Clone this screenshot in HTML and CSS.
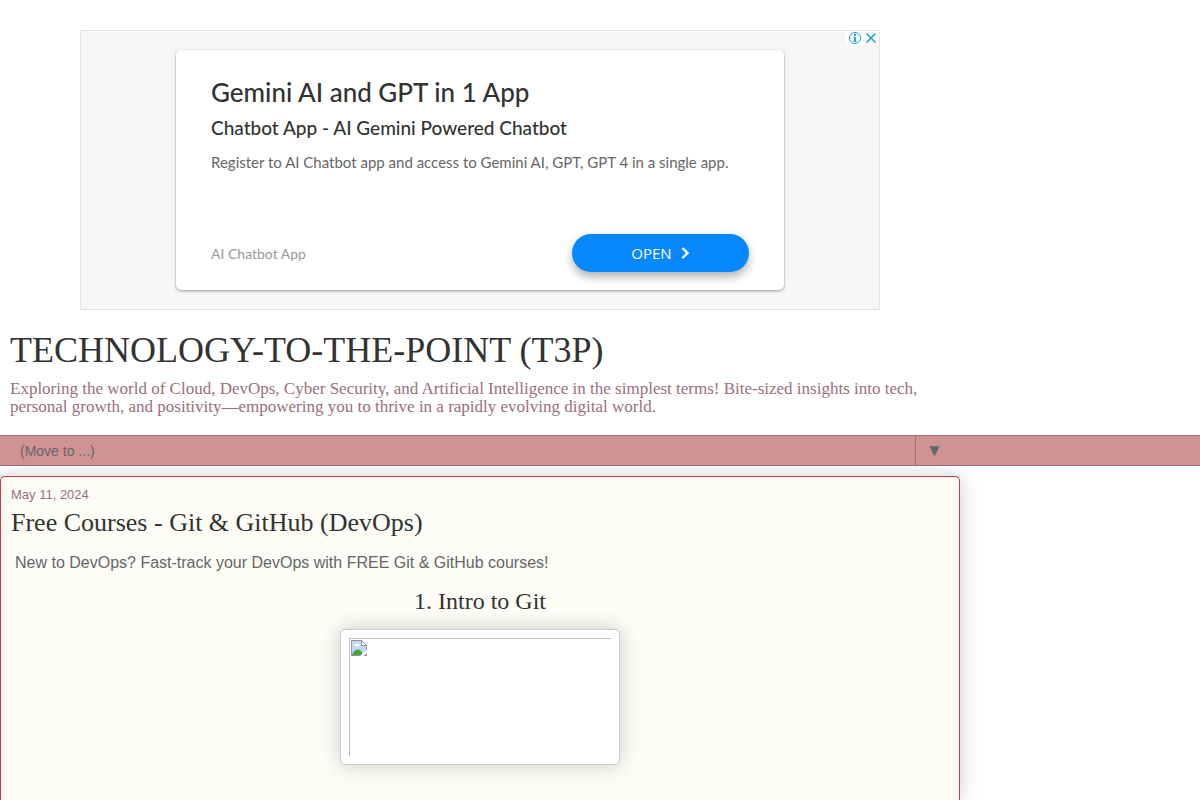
FILE: index.html
```
<!DOCTYPE html>
<html lang="en">
<head>
<meta charset="utf-8">
<meta name="viewport" content="width=device-width, initial-scale=1.0">
<title>TECHNOLOGY-TO-THE-POINT (T3P)</title>
<link rel="stylesheet" href="styles.css">
</head>
<body>
<aside class="ad">
  <div class="ad-choices">
    <a href="#" aria-label="Ad information"><svg width="14" height="14" viewBox="0 0 14 14" fill="none" stroke="#18a5c7"><circle cx="7" cy="7" r="5.5"/><path d="M7 3v2M7 6v5" stroke-width="1.8"/><path d="M5.500 6.300h1.500M5.500 10.500h3"/></svg></a>
    <button class="ad-close" aria-label="Close ad"><svg width="12" height="12" viewBox="0 0 12 12" fill="none" stroke="#18a5c7" stroke-width="1.6"><path d="M1.5 1.5l9 9M10.5 1.5l-9 9"/></svg></button>
  </div>
  <div class="ad-card">
    <h2 class="ad-title">Gemini AI and GPT in 1 App</h2>
    <h3 class="ad-subtitle">Chatbot App - AI Gemini Powered Chatbot</h3>
    <p class="ad-text">Register to AI Chatbot app and access to Gemini AI, GPT, GPT 4 in a single app.</p>
    <div class="ad-footer">
      <span class="ad-brand">AI Chatbot App</span>
      <button class="ad-open">OPEN <svg width="9" height="12" viewBox="0 0 9 12" fill="none" stroke="#fff" stroke-width="2.4"><path d="M1.5 1l5 5-5 5"/></svg></button>
    </div>
  </div>
</aside>

<header class="header">
  <h1 class="title">TECHNOLOGY-TO-THE-POINT (T3P)</h1>
  <p class="description">Exploring the world of Cloud, DevOps, Cyber Security, and Artificial Intelligence in the simplest terms! Bite-sized insights into tech, personal growth, and positivity—empowering you to thrive in a rapidly evolving digital world.</p>
</header>

<nav class="tabs">
  <div class="tabs-inner">
    <select class="tabs-select" aria-label="Move to">
      <option>(Move to ...)</option>
    </select>
    <span class="tabs-arrow" aria-hidden="true">&#9660;</span>
  </div>
</nav>

<main class="post">
  <div class="date">May 11, 2024</div>
  <h2 class="post-title">Free Courses - Git &amp; GitHub (DevOps)</h2>
  <p class="intro">New to DevOps? Fast-track your DevOps with FREE Git &amp; GitHub courses!</p>
  <h3 class="course-title">1. Intro to Git</h3>
  <a href="#" class="thumb" aria-label="Intro to Git">
    <span class="thumb-empty">
      <svg width="16" height="16" viewBox="0 0 16 16"><path d="M.5.5h10l5 5v10H.5z" fill="#c5d6fb" stroke="#8e9299"/><path d="M3 6c0-1.400 1-2 2-1.600.6-1.500 3-1.200 3 .6 1 0 1 1 0 1z" fill="#fff"/><path d="M1 15c1-3.500 3.500-5.500 6-5.500s4 2 5 5.500z" fill="#45a63a"/><path d="M10.500.5v5h5z" fill="#f6f7f8" stroke="#8e9299"/><path d="M9 16l7-6.500v3L12.500 16z" fill="#fff"/></svg>
    </span>
  </a>
</main>
</body>
</html>
```
FILE: styles.css
```
* {
  box-sizing: border-box;
}

body {
  margin: 0;
  padding-top: 30px;
  min-height: 100vh;
  display: flex;
  flex-direction: column;
  background: #fff;
  color: #666;
  font-family: "Liberation Sans", Arial, sans-serif;
}

h1, h2, h3, p {
  margin: 0;
  font-weight: normal;
}

button {
  border: 0;
  padding: 0;
  cursor: pointer;
}

svg {
  display: block;
}

/* ad */
.ad {
  position: relative;
  width: calc(100% - 160px);
  max-width: 800px;
  margin-left: 80px;
  padding: 19px 95px;
  border: 1px solid #e4e4e4;
  background: #f7f7f7;
  font-family: Lato, sans-serif;
}

.ad-choices {
  position: absolute;
  top: 0;
  right: 0;
  display: flex;
  align-items: center;
  gap: 3px;
  padding: 0 2px;
  background: #fff;
}

.ad-close {
  background: none;
}

.ad-card {
  padding: 27px 35px 18px;
  border-radius: 5px;
  background: #fff;
  box-shadow: 0 1px 3px rgba(0, 0, 0, .4);
}

.ad-title {
  color: #333;
  font-size: 26px;
  line-height: 30px;
  font-weight: 500;
}

.ad-subtitle {
  margin-top: 10px;
  color: #333;
  font-size: 19px;
  line-height: 22px;
  font-weight: 500;
}

.ad-text {
  margin-top: 12px;
  font-size: 15px;
  line-height: 22px;
}

.ad-footer {
  display: flex;
  align-items: center;
  justify-content: space-between;
  margin-top: 61px;
}

.ad-brand {
  color: #999;
  font-size: 14px;
}

.ad-open {
  display: flex;
  align-items: center;
  justify-content: center;
  gap: 9px;
  width: 177px;
  height: 38px;
  border-radius: 19px;
  background: #0788ff;
  color: #fff;
  font-family: "Open Sans", sans-serif;
  font-size: 15px;
  box-shadow: 0 5px 10px rgba(0, 0, 0, .3);
}

/* header */
.header {
  max-width: 960px;
  padding: 20px 10px 19px;
  font-family: Georgia, "Liberation Serif", serif;
}

.title {
  color: #333;
  font-size: 36px;
  line-height: 40px;
}

.description {
  margin-top: 10px;
  color: #997080;
  font-size: 17px;
  line-height: 18px;
}

/* page menu */
.tabs {
  position: relative;
  z-index: 1;
  border: solid #997080;
  border-width: 1px 0;
  background: #cf9393;
}

.tabs-inner {
  display: flex;
  max-width: 960px;
}

.tabs-select {
  flex: 1;
  height: 29px;
  padding: 0 20px;
  border: 0;
  appearance: none;
  background: transparent;
  color: #666;
  font-family: "Liberation Sans", Arial, sans-serif;
  font-size: 14px;
}

.tabs-arrow {
  width: 45px;
  padding-left: 10px;
  border-left: 1px solid #997080;
  font-size: 17px;
  line-height: 29px;
}

/* post */
.post {
  flex: 1;
  width: 100%;
  max-width: 960px;
  margin-top: 10px;
  padding: 10px 10px 34px;
  border: 1px solid #bb3e45;
  border-bottom: 0;
  border-radius: 5px 5px 0 0;
  background: #fdfdf6;
  box-shadow: 0 0 20px rgba(0, 0, 0, .2);
}

.date {
  color: #997080;
  font-size: 13px;
  line-height: 16px;
}

.post-title {
  margin-top: 6px;
  color: #333;
  font-family: Georgia, "Liberation Serif", serif;
  font-size: 26px;
  line-height: 28px;
}

.intro {
  margin-top: 16px;
  padding: 0 4px;
  font-size: 16px;
  line-height: 20px;
}

.course-title {
  margin-top: 16px;
  color: #333;
  font-family: Georgia, "Liberation Serif", serif;
  font-size: 24px;
  line-height: 24px;
  text-align: center;
}

.thumb {
  display: block;
  max-width: 280px;
  margin: 16px auto 0;
  padding: 8px;
  border: 1px solid #ccc;
  border-radius: 5px;
  background: #fff;
  box-shadow: 0 0 20px rgba(0, 0, 0, .2);
}

.thumb-empty {
  display: block;
  height: 118px;
  padding: 1px;
  border: solid #c0c0c0;
  border-width: 1px 0 0 1px;
}
```
